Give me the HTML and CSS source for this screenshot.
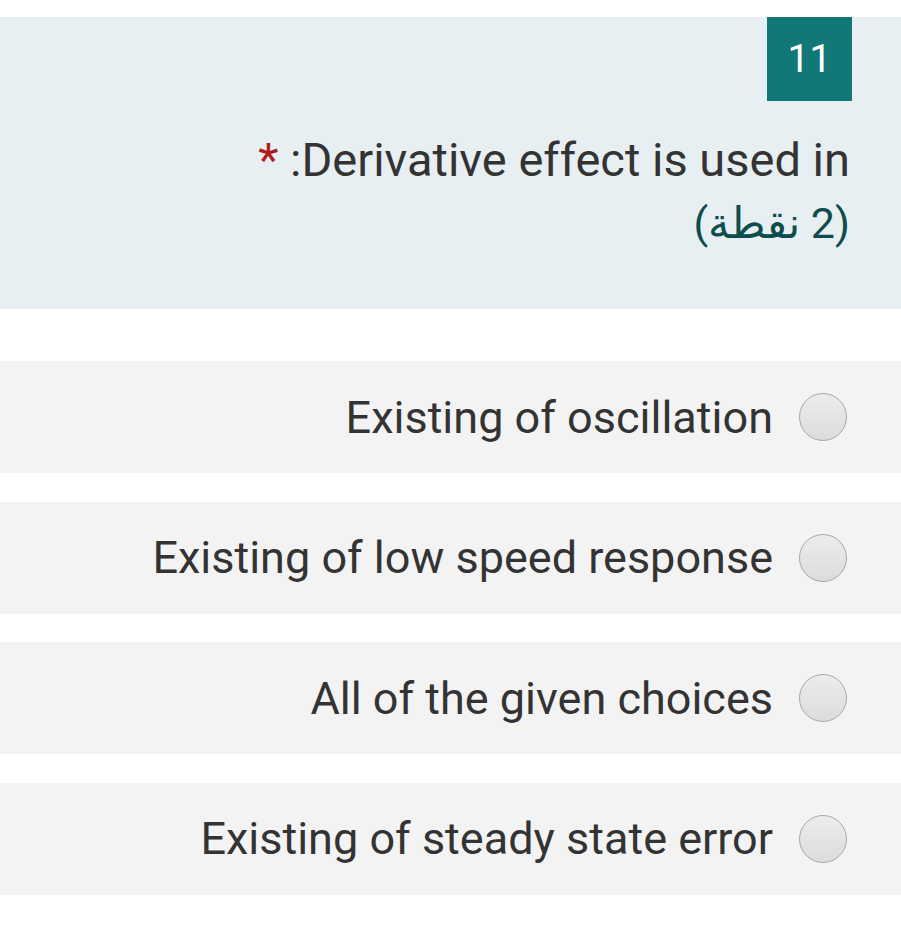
FILE: index.html
```html
<!DOCTYPE html>
<html lang="ar" dir="rtl">
<head>
<meta charset="utf-8">
<link rel="stylesheet" href="styles.css">
</head>
<body>
<div class="question">
  <div class="badge-row"><div class="badge">11</div></div>
  <div class="qtext"><span dir="rtl">Derivative effect is used in:</span> <span class="req">*</span></div>
  <div class="points">(2 نقطة)</div>
</div>
<div class="options">
  <label class="option"><span class="radio"></span><span class="label">Existing of oscillation</span></label>
  <label class="option"><span class="radio"></span><span class="label">Existing of low speed response</span></label>
  <label class="option"><span class="radio"></span><span class="label">All of the given choices</span></label>
  <label class="option"><span class="radio"></span><span class="label">Existing of steady state error</span></label>
</div>
</body>
</html>
```
FILE: styles.css
```css
html, body {
  margin: 0;
  padding: 0;
  background: #ffffff;
  font-family: Roboto, "DejaVu Sans", sans-serif;
  color: #333333;
}
.question {
  margin-top: 17px;
  background: #e7eff2;
  padding: 0 51px 55px 20px;
}
.badge-row {
  display: flex;
  margin-right: -2px;
}
.badge {
  width: 85px;
  height: 84px;
  background: #117777;
  color: #ffffff;
  font-size: 39px;
  display: flex;
  align-items: center;
  justify-content: center;
}
.qtext {
  margin-top: 27px;
  font-size: 47px;
  line-height: 64px;
  color: #333333;
}
.req {
  color: #b01c1c;
}
.points {
  font-size: 43px;
  line-height: 62px;
  color: #0e4d4d;
}
.options {
  margin-top: 52px;
  display: flex;
  flex-direction: column;
  gap: 28.6px;
}
.option {
  display: flex;
  align-items: center;
  background: #f3f3f3;
  height: 112px;
  padding-right: 54px;
  gap: 26px;
}
.radio {
  width: 46px;
  height: 46px;
  border-radius: 50%;
  border: 1px solid #a8a8a8;
  background: linear-gradient(#ececec, #dcdcdc);
  flex: none;
}
.label {
  font-size: 45px;
  color: #333333;
}
```
